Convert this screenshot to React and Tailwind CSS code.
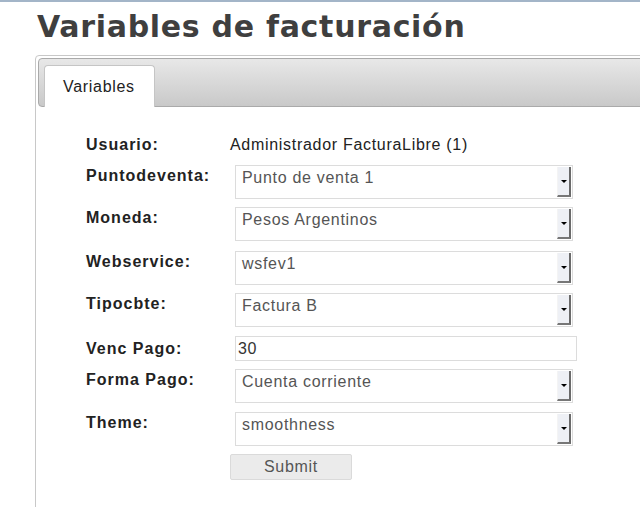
import React from 'react';

const fields = [
  { label: 'Puntodeventa:', type: 'select', value: 'Punto de venta 1', mt: 'mt-[11px]' },
  { label: 'Moneda:', type: 'select', value: 'Pesos Argentinos', mt: 'mt-[8px]' },
  { label: 'Webservice:', type: 'select', value: 'wsfev1', mt: 'mt-[10px]' },
  { label: 'Tipocbte:', type: 'select', value: 'Factura B', mt: 'mt-[8px]' },
  { label: 'Venc Pago:', type: 'input', value: '30', mt: 'mt-[9px]' },
  { label: 'Forma Pago:', type: 'select', value: 'Cuenta corriente', mt: 'mt-[8px]' },
  { label: 'Theme:', type: 'select', value: 'smoothness', mt: 'mt-[9px]' },
];

const text = "font-['Liberation_Sans',Arial,sans-serif] text-[16px] tracking-[0.7px] leading-[18px]";
const label = "font-['Liberation_Sans',Arial,sans-serif] text-[16px] tracking-[1px] leading-[18px] font-bold text-[#222] w-[144px]";

function FakeSelect({ value }) {
  return (
    <div className={`${text} relative ml-[5px] h-[34px] w-[338px] border border-[#dcdcdc] bg-white pl-[6px] pt-[3px] text-[#555]`}>
      {value}
      <div className="absolute right-[1px] top-[1px] bottom-[1px] flex w-[14px] items-center justify-center border-l border-l-[#f4f4f4] border-r-2 border-b-2 border-r-[#6a6a6a] border-b-[#777] bg-[#eef0f5]">
        <div className="h-0 w-0 border-l-[3px] border-r-[3px] border-t-[3px] border-l-transparent border-r-transparent border-t-black" />
      </div>
    </div>
  );
}

function FakeInput({ value }) {
  return (
    <div className={`${text} ml-[5px] flex h-[25px] w-[342px] items-center border border-[#dcdcdc] bg-white pl-[2px] text-[#333]`}>
      {value}
    </div>
  );
}

export default function App() {
  return (
    <div className="relative h-[507px] w-[640px] overflow-hidden bg-white">
      <div className="h-[2px] bg-[#a3b5c8]" />

      {/* Title */}
      <h1 className="ml-[37px] mt-[7px] h-[36px] font-['DejaVu_Sans',sans-serif] text-[30px] font-bold leading-[36px] tracking-[0.7px] text-[#3f3f3f]">
        Variables de facturación
      </h1>

      {/* Tab panel */}
      <div className="ml-[35px] mt-[10px] min-h-[520px] w-[700px] rounded-[4px] border border-[#c8c8c8] p-[2px]">
        <div className="flex h-[49px] items-end rounded-[4px] border border-[#aaa] bg-gradient-to-b from-[#e8e8e8] to-[#c9c9c9] px-[5px]">
          <div className={`${text} relative -mb-px flex h-[42px] w-[111px] items-center rounded-t-[4px] border border-b-0 border-[#c5c5c5] bg-white pl-[18px] text-[#222]`}>
            Variables
          </div>
        </div>

        {/* Form */}
        <div className="ml-[48px] pt-[29px]">
          <div className="flex">
            <div className={label}>Usuario:</div>
            <div className={`${text} text-[#222]`}>Administrador FacturaLibre (1)</div>
          </div>

          {fields.map((f) => (
            <div key={f.label} className={`flex ${f.type === 'input' ? 'items-center' : 'items-start'} ${f.mt}`}>
              <div className={`${label} ${f.type === 'input' ? '' : 'pt-[2px]'}`}>{f.label}</div>
              {f.type === 'input' ? <FakeInput value={f.value} /> : <FakeSelect value={f.value} />}
            </div>
          ))}

          <div className="ml-[144px] mt-[8px]">
            <button className={`${text} h-[26px] w-[122px] rounded-[2px] border border-[#dadada] bg-[#ebebeb] text-[#555]`}>
              Submit
            </button>
          </div>
        </div>
      </div>
    </div>
  );
}
